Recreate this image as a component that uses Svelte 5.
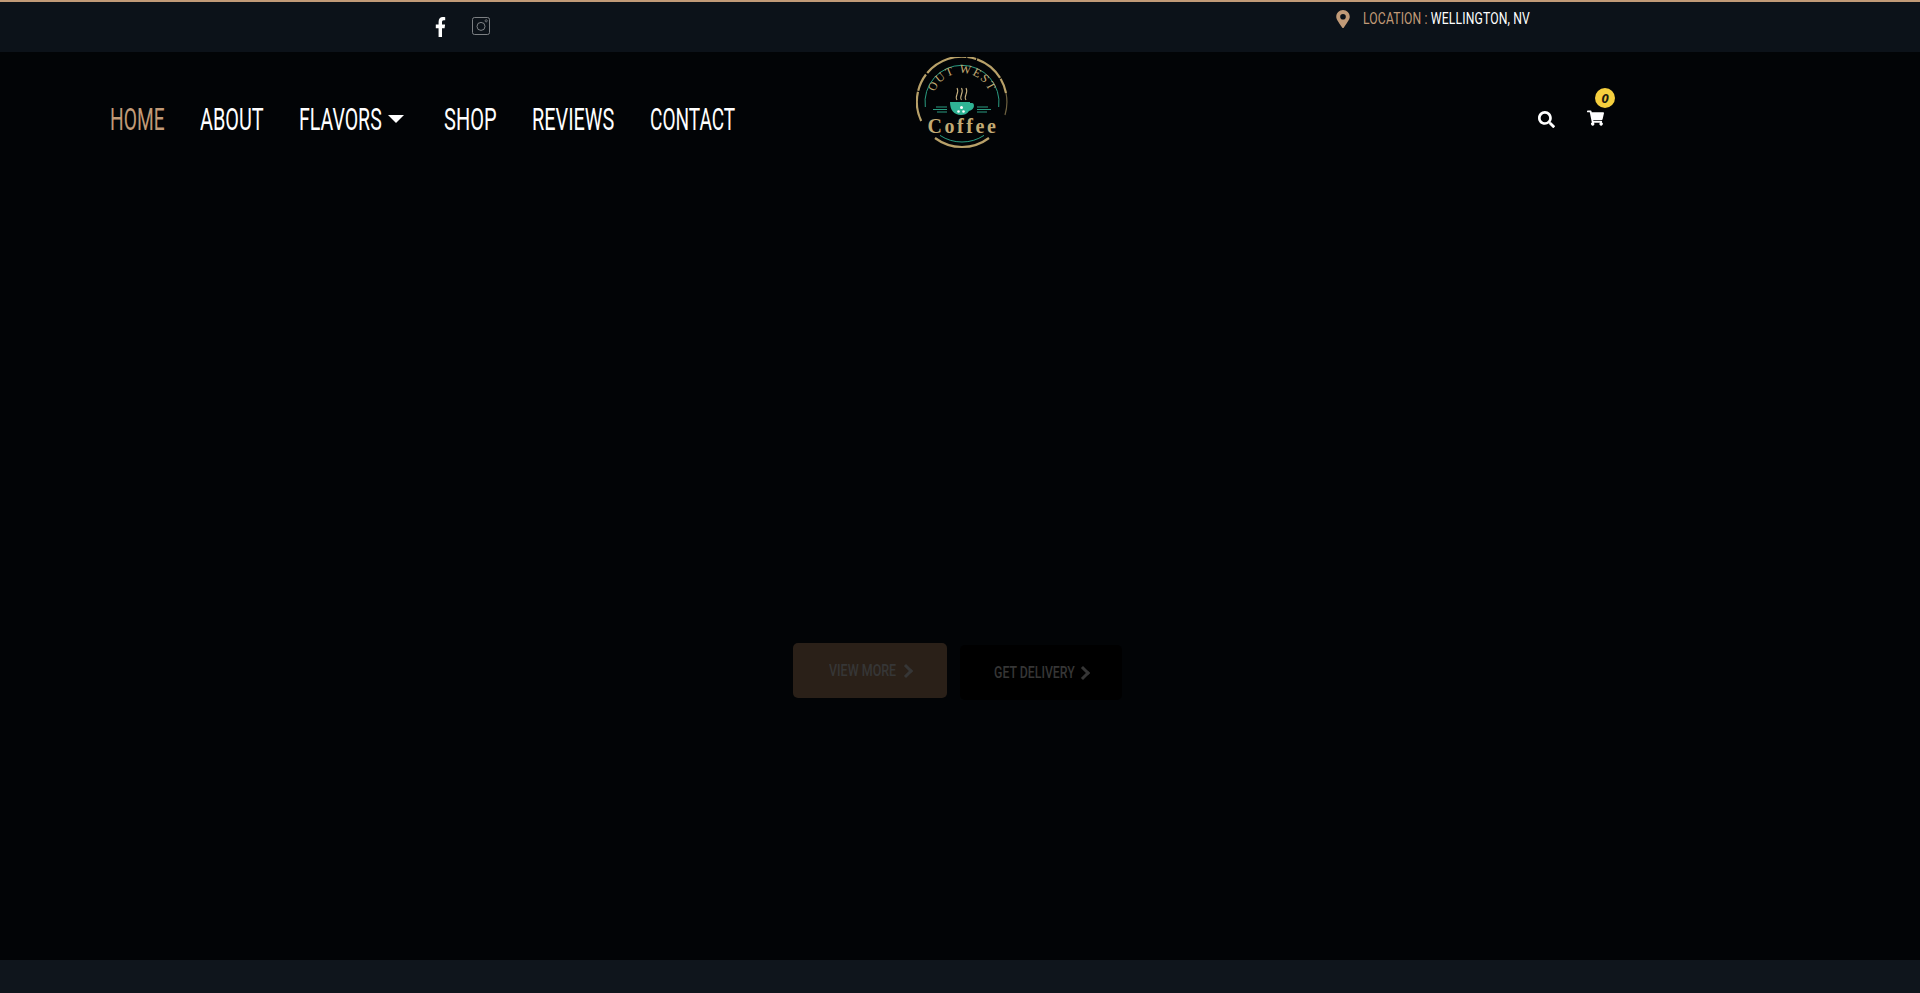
<script lang="ts">
  /** Header navigation entries. No condensed font here, so width and sx squeeze Roboto to fit */
  const navItems = [
    { label: 'HOME', width: 54, sx: 0.6, active: true },
    { label: 'ABOUT', width: 63, sx: 0.62 },
    { label: 'FLAVORS', width: 82, sx: 0.61, caret: true },
    { label: 'SHOP', width: 52, sx: 0.625 },
    { label: 'REVIEWS', width: 82, sx: 0.62 },
    { label: 'CONTACT', width: 84, sx: 0.595 },
  ];
</script>

<div class="page">
  <div class="topbar">
    <div class="socials">
      <svg class="fb" viewBox="0 0 320 512" preserveAspectRatio="none" aria-label="Facebook">
        <path fill="#fff" d="M279 288l14-93h-89v-60c0-25 12-50 52-50h41V6s-37-6-72-6c-73 0-121 44-121 125v70H23v93h81v224h100V288z" />
      </svg>
      <svg class="ig" viewBox="0 0 18 18" aria-label="Instagram">
        <rect x="0.5" y="0.5" width="17" height="17" rx="2" fill="none" stroke="#8a8d90" stroke-width="0.9" />
        <circle cx="9" cy="9.4" r="4" fill="none" stroke="#8a8d90" stroke-width="0.9" />
        <circle cx="14.2" cy="3.8" r="1.1" fill="none" stroke="#8a8d90" stroke-width="0.7" />
      </svg>
    </div>
    <div class="location">
      <svg class="pin" viewBox="0 0 384 512">
        <path fill="#c19a77" d="M172 502C27 291 0 256 0 192 0 86 86 0 192 0s192 86 192 192c0 64-27 99-172 310a24 24 0 0 1-40 0zm20-230a80 80 0 1 0 0-160 80 80 0 0 0 0 160z" />
      </svg>
      <span class="location__text">
        <span class="location__label">LOCATION :</span>
        <span class="location__value">WELLINGTON, NV</span>
      </span>
    </div>
  </div>

  <header class="header">
    <nav class="nav">
      {#each navItems as item}
        <a class="nav__link" class:nav__link--active={item.active} href="#top">
          <span class="nav__text" style="width: {item.width}px; --sx: {item.sx}">{item.label}</span>
          {#if item.caret}<span class="nav__caret"></span>{/if}
        </a>
      {/each}
    </nav>

    <svg class="logo" viewBox="0 0 92 92" aria-label="Out West Coffee">
      <defs>
        <path id="logo-arc" d="M17 45 A29 29 0 0 1 75 45" />
      </defs>
      <!-- outer worn ring -->
      <path d="M5.200 64 A45 45 0 1 1 90 36" fill="none" stroke="#b8a169" stroke-width="2.2" stroke-dasharray="30 1 18 2 44 1 9 1" />
      <path d="M90 36 A45 45 0 0 1 89 58" fill="none" stroke="#6d6140" stroke-width="1.2" />
      <path d="M19 81 A45 45 0 0 0 73 81" fill="none" stroke="#b8a169" stroke-width="2.2" />
      <!-- inner teal ring -->
      <path d="M9.300 50 A37 37 0 1 1 82.700 50" fill="none" stroke="#2fae90" stroke-width="0.9" />
      <path d="M24 78.400 A40 40 0 0 0 68 78.400" fill="none" stroke="#2fae90" stroke-width="0.9" />
      <text class="logo__arc"><textPath href="#logo-arc" startOffset="50%" text-anchor="middle">OUT WEST</textPath></text>
      <!-- steam -->
      <path d="M41 43c-3-4 3-7 0-12M45.500 43c-3-4 3-7 0-12M50 43c-3-4 3-7 0-12" fill="none" stroke="#c9b382" stroke-width="1.1" />
      <!-- cup -->
      <path fill="#2fb394" d="M34 45h20v1h2c3 0 3 7-3 8-2 3-5 4-8 4-7 0-11-5-11-13z" />
      <circle cx="42.500" cy="54.500" r="1.300" fill="#fff" />
      <circle cx="45.500" cy="50.500" r="1.500" fill="#fff" />
      <circle cx="47.500" cy="54.500" r="1.300" fill="#fff" />
      <!-- side lines -->
      <path d="M20 50h11M17 52.500h14M21 55h10M61 50h11M61 52.500h14M61 55h10" stroke="#2fae90" stroke-width="0.9" fill="none" />
      <text class="logo__name" x="47" y="76" text-anchor="middle">Coffee</text>
    </svg>

    <div class="tools">
      <svg class="search" viewBox="0 0 512 512" aria-label="Search">
        <path fill="#fff" d="M505 443L405 343c-4-4-11-7-17-7h-16c28-35 44-80 44-128C416 93 323 0 208 0S0 93 0 208s93 208 208 208c48 0 93-16 128-44v16c0 6 3 13 7 17l100 100c9 9 24 9 34 0l28-28c9-10 9-25 0-34zM208 336a128 128 0 1 1 0-256 128 128 0 0 1 0 256z" />
      </svg>
      <div class="cart">
        <svg viewBox="0 0 576 512" aria-label="Cart">
          <path fill="#fff" d="M528 301l47-208c4-15-8-29-23-29H159l-9-45C148 8 138 0 126 0H24C11 0 0 11 0 24v16c0 13 11 24 24 24h70l70 343a56 56 0 1 0 67 9h210a56 56 0 1 0 64-10l5-25c4-15-8-29-23-29H218l-7-32h293c11 0 21-8 24-19z" />
        </svg>
        <span class="cart__badge">0</span>
      </div>
    </div>
  </header>

  <main class="hero">
    <a class="btn btn--primary" href="#top"><span class="btn__text btn__text--view">VIEW MORE</span><span class="btn__chevron"></span></a>
    <a class="btn btn--dark" href="#top"><span class="btn__text btn__text--delivery">GET DELIVERY</span><span class="btn__chevron"></span></a>
  </main>

  <div class="footer-strip"></div>
</div>

<style>
  :global(body) {
    margin: 0;
    background: #020406;
  }

  .page {
    display: flex;
    flex-direction: column;
    height: 993px;
    overflow: hidden;
    font-family: 'Roboto', sans-serif;
  }

  /* Top bar */
  .topbar {
    display: flex;
    flex: 0 0 52px;
    box-sizing: border-box;
    padding: 15px 0 0 435px;
    background: #0c1219;
    border-top: 2px solid #c19a77;
  }

  .socials {
    display: flex;
    align-items: flex-start;
    gap: 26px;
  }

  .fb {
    width: 11px;
    height: 20px;
  }

  .ig {
    width: 18px;
    height: 18px;
  }

  .location {
    display: flex;
    align-items: center;
    margin: -7px 0 0 846px;
    height: 18px;
  }

  .pin {
    width: 14px;
    height: 18px;
    margin-right: 13px;
  }

  .location__text {
    display: block;
    width: 168px;
    margin-top: -1px;
    font-size: 16px;
    letter-spacing: 0.2px;
    white-space: nowrap;
    transform: scaleX(0.76);
    transform-origin: left center;
  }

  .location__label {
    color: #c19a77;
  }

  .location__value {
    color: #fff;
  }

  /* Main header */
  .header {
    display: flex;
    align-items: flex-start;
    flex: 0 0 100px;
    padding-left: 110px;
  }

  .nav {
    display: flex;
    gap: 36px;
    width: 806px;
    margin-top: 48px;
  }

  .nav__link {
    display: flex;
    align-items: center;
    gap: 7px;
    color: #fff;
    font-size: 32px;
    font-weight: 400;
    line-height: 38px;
    text-decoration: none;
    white-space: nowrap;
  }

  .nav__link--active {
    color: #c19a77;
  }

  .nav__text {
    display: block;
    transform: scaleX(var(--sx));
    transform-origin: left center;
  }

  .nav__caret {
    width: 0;
    height: 0;
    margin-right: 4px;
    border-left: 8px solid transparent;
    border-right: 8px solid transparent;
    border-top: 8px solid #fff;
  }

  .logo {
    flex: none;
    width: 92px;
    height: 92px;
    margin-top: 5px;
  }

  .logo__arc {
    font-family: 'Liberation Serif', serif;
    font-size: 12px;
    letter-spacing: 1.4px;
    fill: #c2ab74;
  }

  .logo__name {
    font-family: 'Liberation Serif', serif;
    font-size: 20px;
    font-weight: 700;
    letter-spacing: 2.6px;
    fill: #c2ab74;
  }

  .tools {
    display: flex;
    align-items: flex-start;
    gap: 32px;
    margin: 59px 0 0 530px;
  }

  .search {
    width: 17px;
    height: 17px;
  }

  .cart {
    position: relative;
    width: 17px;
    height: 16px;
    margin-top: -1px;
  }

  .cart svg {
    display: block;
    width: 17px;
    height: 16px;
  }

  .cart__badge {
    position: absolute;
    top: -22px;
    left: 8px;
    width: 20px;
    height: 20px;
    border-radius: 50%;
    background: #f5cf3e;
    color: #1c1a10;
    font-family: 'Open Sans', sans-serif;
    font-size: 13px;
    font-style: italic;
    font-weight: 700;
    line-height: 20px;
    text-align: center;
  }

  /* Hero */
  .hero {
    flex: 1;
    display: flex;
    justify-content: center;
    align-items: flex-start;
    gap: 13px;
    padding: 491px 5px 0 0;
  }

  .btn {
    display: flex;
    align-items: center;
    justify-content: center;
    gap: 7px;
    box-sizing: border-box;
    height: 55px;
    border-radius: 5px;
    color: #363636;
    font-size: 16px;
    font-weight: 500;
    text-decoration: none;
  }

  .btn--primary {
    width: 154px;
    background: #2a2018;
  }

  .btn--dark {
    width: 162px;
    margin-top: 2px;
    background: #000;
  }

  .btn__text {
    display: block;
    white-space: nowrap;
    transform-origin: left center;
  }

  .btn__text--view {
    width: 67px;
    transform: scaleX(0.78);
  }

  .btn__text--delivery {
    width: 79px;
    transform: scaleX(0.77);
  }

  .btn__chevron {
    width: 7px;
    height: 7px;
    margin-left: -2px;
    border-top: 3px solid #363636;
    border-right: 3px solid #363636;
    transform: rotate(45deg);
  }

  .footer-strip {
    flex: 0 0 33px;
    background: #0f151c;
  }
</style>
